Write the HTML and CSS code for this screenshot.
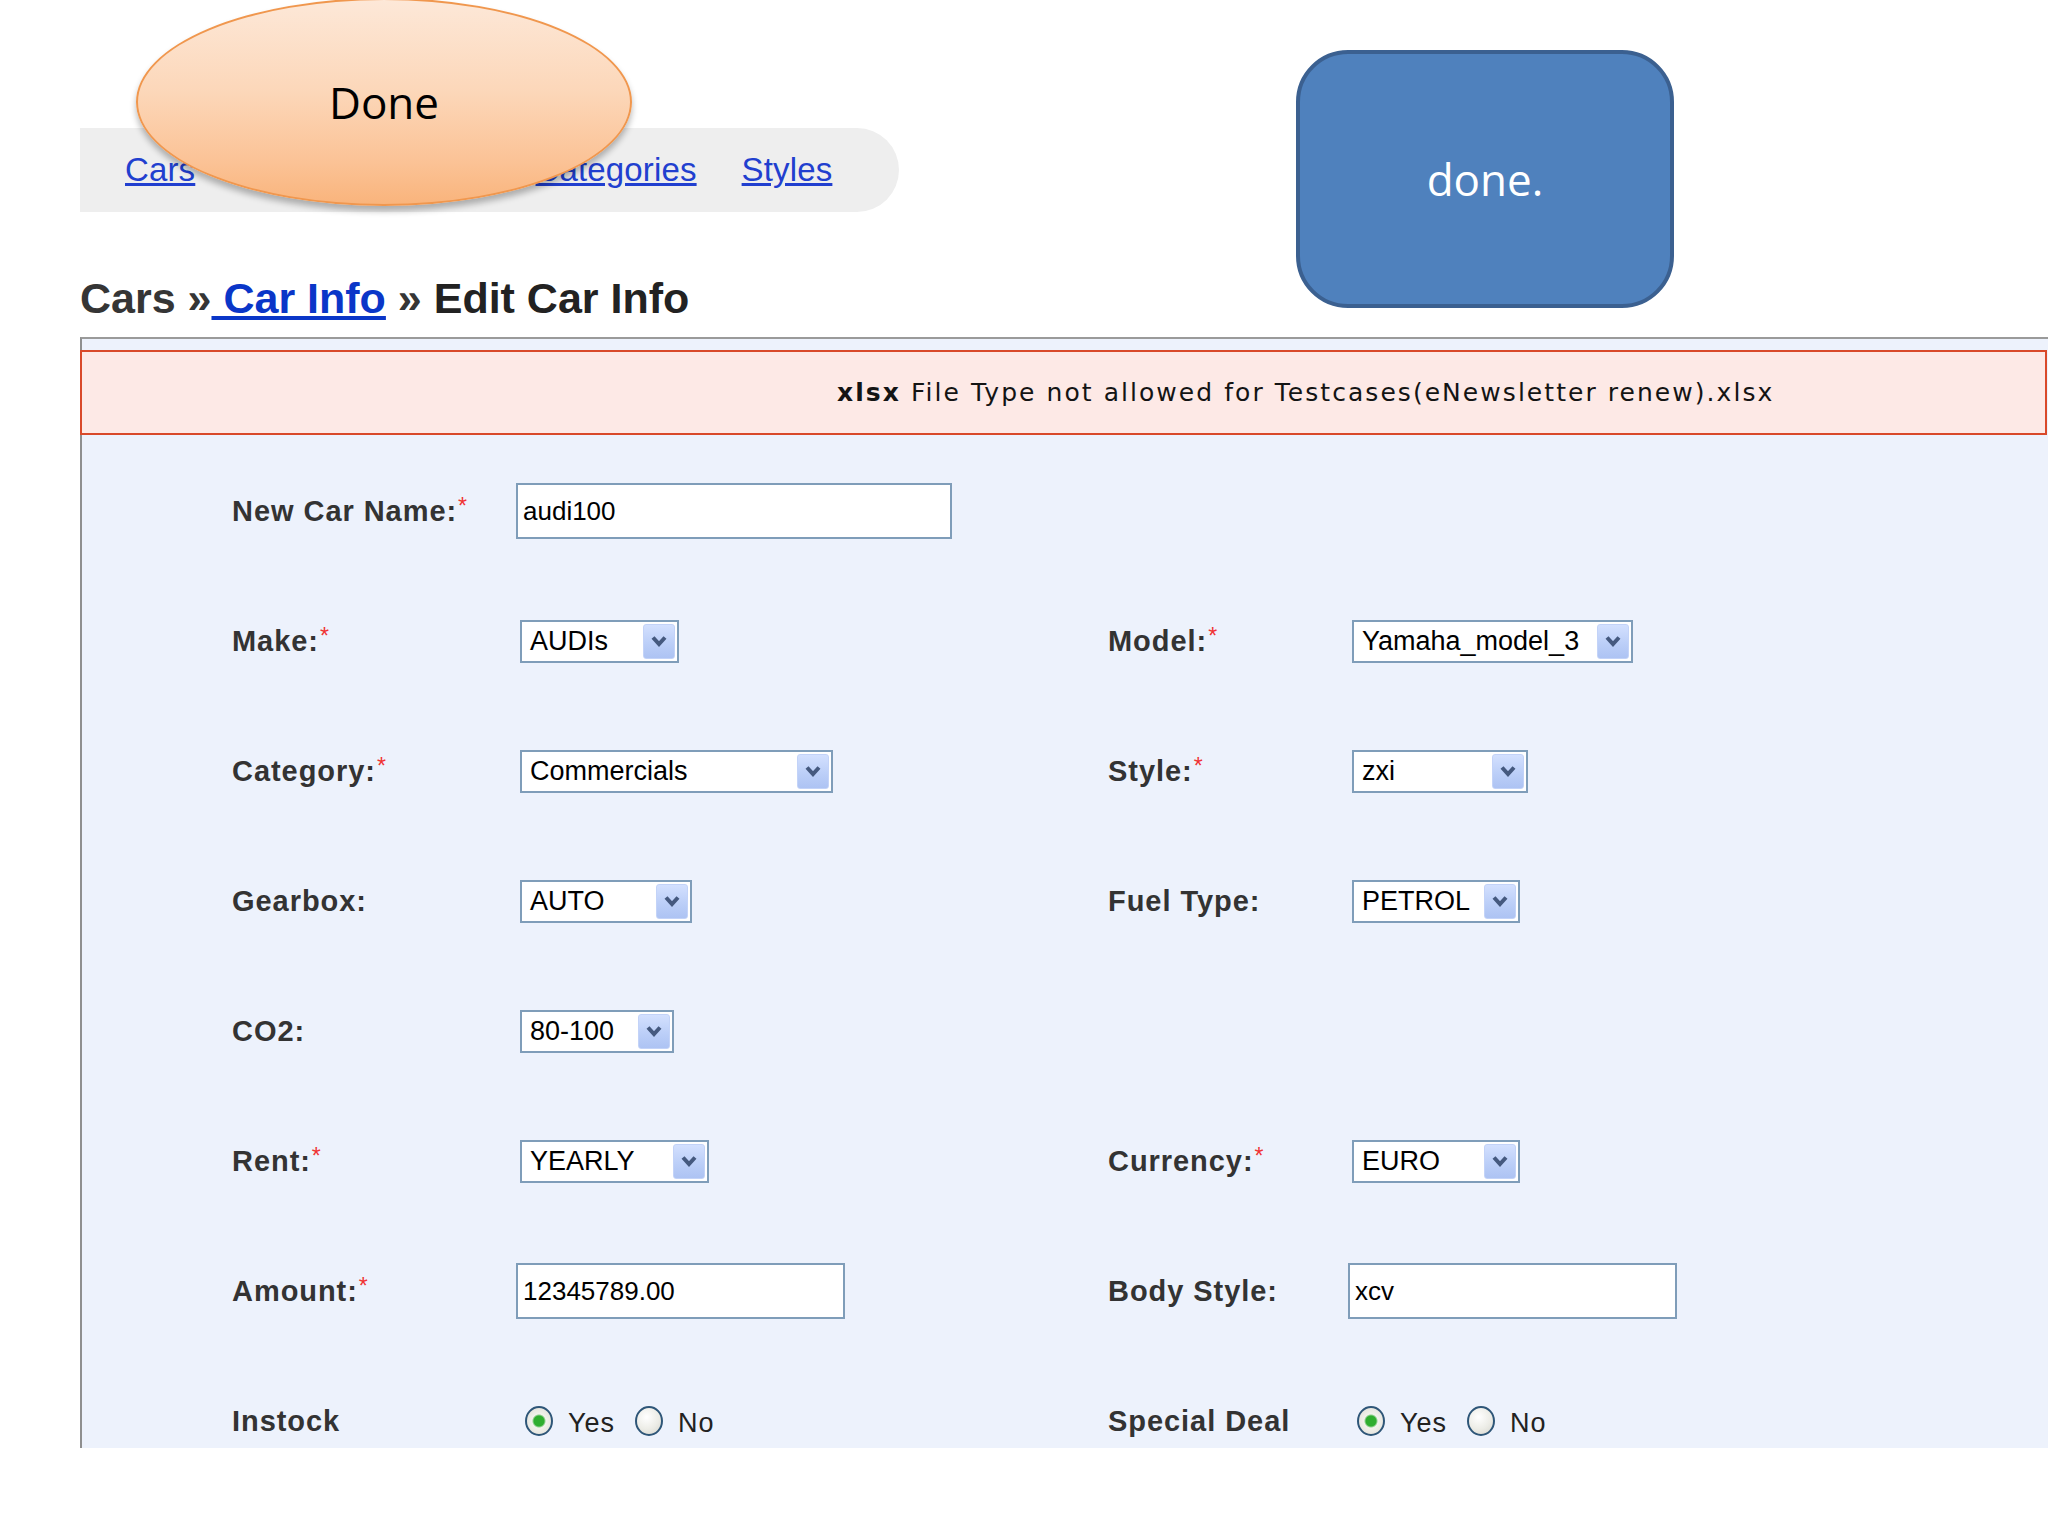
FILE: index.html
```html
<!DOCTYPE html>
<html lang="en">
<head>
<meta charset="utf-8">
<title>Edit Car Info</title>
<link rel="stylesheet" href="styles.css">
</head>
<body>
<div class="page">
  <nav class="tabs">
    <a href="#">Cars</a>
    <a href="#">Makes</a>
    <a href="#">Models</a>
    <a href="#">Categories</a>
    <a href="#">Styles</a>
  </nav>

  <h1 class="crumb">Cars »<a href="#"> Car Info</a> » <span class="cur">Edit Car Info</span></h1>

  <section class="panel">
    <div class="error"><span><b>xlsx</b> File Type not allowed for Testcases(eNewsletter renew).xlsx</span></div>

    <div class="form">
      <!-- row 1 -->
      <label class="lbl">New Car Name:<span class="req">*</span></label>
      <div class="field w436">audi100</div>
      <span></span><span></span>

      <!-- row 2 -->
      <label class="lbl">Make:<span class="req">*</span></label>
      <div class="select w159"><span>AUDIs</span><span class="btn"><svg viewBox="0 0 18 12" width="18" height="12"><path d="M3 2.5 L9 9 L15 2.5"/></svg></span></div>
      <label class="lbl">Model:<span class="req">*</span></label>
      <div class="select w281"><span>Yamaha_model_3</span><span class="btn"><svg viewBox="0 0 18 12" width="18" height="12"><path d="M3 2.5 L9 9 L15 2.5"/></svg></span></div>

      <!-- row 3 -->
      <label class="lbl">Category:<span class="req">*</span></label>
      <div class="select w313"><span>Commercials</span><span class="btn"><svg viewBox="0 0 18 12" width="18" height="12"><path d="M3 2.5 L9 9 L15 2.5"/></svg></span></div>
      <label class="lbl">Style:<span class="req">*</span></label>
      <div class="select w176"><span>zxi</span><span class="btn"><svg viewBox="0 0 18 12" width="18" height="12"><path d="M3 2.5 L9 9 L15 2.5"/></svg></span></div>

      <!-- row 4 -->
      <label class="lbl">Gearbox:</label>
      <div class="select w172"><span>AUTO</span><span class="btn"><svg viewBox="0 0 18 12" width="18" height="12"><path d="M3 2.5 L9 9 L15 2.5"/></svg></span></div>
      <label class="lbl">Fuel Type:</label>
      <div class="select w168"><span>PETROL</span><span class="btn"><svg viewBox="0 0 18 12" width="18" height="12"><path d="M3 2.5 L9 9 L15 2.5"/></svg></span></div>

      <!-- row 5 -->
      <label class="lbl">CO2:</label>
      <div class="select w154"><span>80-100</span><span class="btn"><svg viewBox="0 0 18 12" width="18" height="12"><path d="M3 2.5 L9 9 L15 2.5"/></svg></span></div>
      <span></span><span></span>

      <!-- row 6 -->
      <label class="lbl">Rent:<span class="req">*</span></label>
      <div class="select w189"><span>YEARLY</span><span class="btn"><svg viewBox="0 0 18 12" width="18" height="12"><path d="M3 2.5 L9 9 L15 2.5"/></svg></span></div>
      <label class="lbl">Currency:<span class="req">*</span></label>
      <div class="select w168"><span>EURO</span><span class="btn"><svg viewBox="0 0 18 12" width="18" height="12"><path d="M3 2.5 L9 9 L15 2.5"/></svg></span></div>

      <!-- row 7 -->
      <label class="lbl">Amount:<span class="req">*</span></label>
      <div class="field w329">12345789.00</div>
      <label class="lbl">Body Style:</label>
      <div class="field w329">xcv</div>

      <!-- row 8 -->
      <label class="lbl">Instock</label>
      <div class="radios"><span class="radio on"></span><span class="opt">Yes</span><span class="radio"></span><span class="opt">No</span></div>
      <label class="lbl">Special Deal</label>
      <div class="radios"><span class="radio on"></span><span class="opt">Yes</span><span class="radio"></span><span class="opt">No</span></div>
    </div>
  </section>

  <div class="callout-ellipse">Done</div>
  <div class="callout-box">done.</div>
</div>
</body>
</html>
```

FILE: styles.css
```css
* { box-sizing: border-box; }

html, body {
  margin: 0;
  padding: 0;
  background: #ffffff;
}

body {
  width: 2048px;
  height: 1536px;
  overflow: hidden;
  font-family: "Liberation Sans", Arial, sans-serif;
  color: #222;
}

.page {
  position: relative;
  padding-left: 80px;
  padding-top: 128px;
}

/* ---------- top tab bar ---------- */
.tabs {
  display: flex;
  align-items: center;
  gap: 45px;
  width: 819px;
  height: 84px;
  padding-left: 45px;
  background: #eeeeee;
  border-radius: 0 42px 42px 0;
}

.tabs a {
  font-size: 33px;
  letter-spacing: 0.15px;
  color: #213fcf;
  text-decoration: underline;
}

/* ---------- breadcrumb ---------- */
.crumb {
  margin: 61px 0 0;
  font-size: 43px;
  line-height: 50px;
  font-weight: bold;
  color: #353535;
}

.crumb a {
  color: #0a36c8;
  text-decoration: underline;
}

.crumb .cur { color: #222; }

/* ---------- panel ---------- */
.panel {
  margin-top: 14px;
  background: #edf2fc;
  border-top: 2px solid #9a9a9a;
  border-left: 2px solid #8f8f8f;
}

.error {
  display: flex;
  align-items: center;
  height: 85px;
  margin: 11px 1px 0 -2px;
  padding-left: 755px;
  border: 2px solid #d9492a;
  background: #fde9e6;
  font-family: "DejaVu Sans", Verdana, sans-serif;
  font-size: 25px;
  letter-spacing: 2.05px;
  color: #141414;
  white-space: nowrap;
}

.form {
  display: grid;
  grid-template-columns: 288px 588px 244px 1fr;
  grid-auto-rows: 130px;
  align-items: center;
  height: 1002px;
  margin-top: 11px;
  padding-left: 150px;
  overflow: hidden;
}

.lbl {
  font-size: 29px;
  line-height: 33px;
  font-weight: bold;
  letter-spacing: 0.95px;
  color: #333;
  white-space: nowrap;
}

.req {
  color: #f03434;
  font-size: 23px;
  font-weight: normal;
  line-height: 1;
  vertical-align: top;
  margin-left: 1px;
}

/* text inputs */
.field {
  display: flex;
  align-items: center;
  height: 56px;
  margin-left: -4px;
  padding-left: 5px;
  border: 2px solid #7f9db9;
  background: #ffffff;
  font-size: 26px;
  color: #000;
}

/* drop downs */
.select {
  display: flex;
  align-items: center;
  justify-content: space-between;
  height: 43px;
  padding: 2px 2px 2px 8px;
  border: 2px solid #7f9db9;
  background: #ffffff;
  font-size: 27px;
  color: #000;
  white-space: nowrap;
}

.select .btn {
  display: flex;
  align-items: center;
  justify-content: center;
  width: 32px;
  align-self: stretch;
  border: 1px solid #c3d3f8;
  border-radius: 3px;
  background: linear-gradient(180deg, #d3e0fe 0%, #bccff8 55%, #adc3f3 100%);
}

.select .btn path {
  fill: none;
  stroke: #45597f;
  stroke-width: 4;
}

.w154 { width: 154px; }
.w159 { width: 159px; }
.w168 { width: 168px; }
.w172 { width: 172px; }
.w176 { width: 176px; }
.w189 { width: 189px; }
.w281 { width: 281px; }
.w313 { width: 313px; }
.w329 { width: 329px; }
.w436 { width: 436px; }

/* radios */
.radios {
  display: flex;
  align-items: center;
  padding-left: 5px;
}

.radio {
  width: 28px;
  height: 30px;
  border-radius: 50%;
  border: 2px solid #2e5678;
  background: radial-gradient(circle at 40% 35%, #ffffff 0%, #ecece6 55%, #d4d4cc 100%);
  flex: none;
}

.radio.on {
  background: radial-gradient(circle at 50% 50%, #2fae2f 0, #2fae2f 5px, #8fd08f 6px, #f2f2ec 7px, #dcdcd4 100%);
}

.radio + .opt { margin-left: 15px; }
.opt + .radio { margin-left: 20px; }

.opt {
  font-size: 27px;
  letter-spacing: 1px;
  color: #222;
  padding-top: 5px;
}

/* ---------- overlaid callouts ---------- */
.callout-ellipse {
  position: absolute;
  left: 136px;
  top: -2px;
  width: 496px;
  height: 208px;
  display: flex;
  align-items: center;
  justify-content: center;
  border-radius: 50%;
  border: 2px solid #f0974e;
  background: linear-gradient(180deg, #fde8d8 0%, #fcd7b9 45%, #fbc295 80%, #f9b47c 100%);
  box-shadow: 0 5px 6px rgba(0, 0, 0, 0.28);
  font-family: "Open Sans", "Noto Sans", sans-serif;
  font-size: 44px;
  color: #000;
}

.callout-box {
  position: absolute;
  left: 1296px;
  top: 50px;
  width: 378px;
  height: 258px;
  display: flex;
  align-items: center;
  justify-content: center;
  border: 4px solid #3b6090;
  border-radius: 52px;
  background: #4f81bd;
  font-family: "Open Sans", "Noto Sans", sans-serif;
  font-size: 44px;
  color: #ffffff;
}
```
